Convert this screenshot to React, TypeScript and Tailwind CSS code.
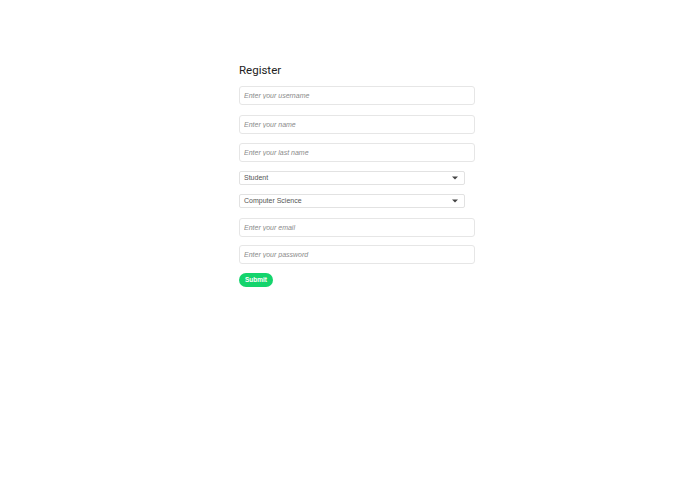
export default function App() {
  const inputCls =
    "block w-[236px] h-[19px] rounded-[3px] border border-[#e6e6e6] bg-white px-[4px] text-[7px] italic text-[#555] placeholder:text-[#8a8a8a] outline-none";
  const selectCls =
    "flex w-[226px] h-[14px] items-center justify-between rounded-[2px] border border-[#e2e2e2] bg-white pl-[4px] pr-[6px] text-[7px] text-[#555]";

  return (
    <div className="min-h-[494px] w-full bg-white font-['Liberation_Sans',Arial,sans-serif]">
      <div className="ml-[239px] pt-[63px] w-[236px]">
        <h1 className="font-['Roboto',sans-serif] text-[11.5px] leading-[14px] text-[#222] mb-[9px]">
          Register
        </h1>
        <div className="flex flex-col">
          <input className={inputCls} placeholder="Enter your username" />
          <input className={`${inputCls} mt-[10px]`} placeholder="Enter your name" />
          <input className={`${inputCls} mt-[9px]`} placeholder="Enter your last name" />
          <div className={`${selectCls} mt-[9px]`}>
            <span>Student</span>
            <svg width="6" height="4" viewBox="0 0 6 4">
              <path d="M0 0.5h6L3 3.5z" fill="#444" />
            </svg>
          </div>
          <div className={`${selectCls} mt-[9px]`}>
            <span>Computer Science</span>
            <svg width="6" height="4" viewBox="0 0 6 4">
              <path d="M0 0.5h6L3 3.5z" fill="#444" />
            </svg>
          </div>
          <input className={`${inputCls} mt-[10px]`} placeholder="Enter your email" />
          <input className={`${inputCls} mt-[8px]`} placeholder="Enter your password" type="password" />
          <button className="mt-[9px] h-[14px] w-[34px] rounded-full bg-[#14d46c] text-[6.5px] font-bold text-white">
            Submit
          </button>
        </div>
      </div>
    </div>
  );
}
